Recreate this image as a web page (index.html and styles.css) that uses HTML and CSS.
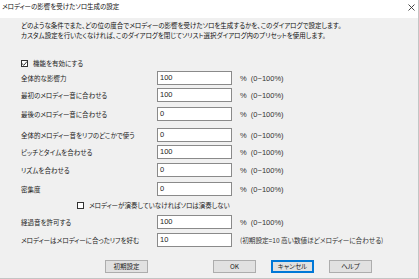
FILE: index.html
```html
<!DOCTYPE html>
<html lang="ja">
<head>
<meta charset="utf-8">
<link rel="stylesheet" href="styles.css">
</head>
<body>
<div class="dialog">
  <div class="titlebar">
    <span class="title">メロディーの影響を受けたソロ生成の設定</span>
    <svg class="close" width="7" height="7" viewBox="0 0 7 7"><path d="M0.5 0.5L6.5 6.5M6.5 0.5L0.5 6.5" stroke="#333" stroke-width="0.9"/></svg>
  </div>
  <div class="content">
    <p class="desc">どのような条件でまた、どの位の度合でメロディーの影響を受けたソロを生成するかを、このダイアログで設定します。<br>カスタム設定を行いたくなければ、このダイアログを閉じてソリスト選択ダイアログ内のプリセットを使用します。</p>
    <label class="check-row">
      <span class="box"><svg width="7" height="7" viewBox="0 0 7 7"><path d="M1 3.6L2.8 5.3L6 1.5" fill="none" stroke="#222" stroke-width="0.9"/></svg></span>
      <span>機能を有効にする</span>
    </label>
    <div class="row mt3"><span class="lbl">全体的な影響力</span><span class="input">100</span><span class="unit">%  (0~100%)</span></div>
    <div class="row mt3"><span class="lbl">最初のメロディー音に合わせる</span><span class="input">100</span><span class="unit">%  (0~100%)</span></div>
    <div class="row mt5"><span class="lbl">最後のメロディー音に合わせる</span><span class="input">0</span><span class="unit">%  (0~100%)</span></div>
    <div class="row mt7"><span class="lbl">全体的メロディー音をリフのどこかで使う</span><span class="input">0</span><span class="unit">%  (0~100%)</span></div>
    <div class="row mt3"><span class="lbl">ピッチとタイムを合わせる</span><span class="input">100</span><span class="unit">%  (0~100%)</span></div>
    <div class="row mt4"><span class="lbl">リズムを合わせる</span><span class="input">0</span><span class="unit">%  (0~100%)</span></div>
    <div class="row mt5"><span class="lbl">密集度</span><span class="input">0</span><span class="unit">%  (0~100%)</span></div>
    <label class="check-row sub">
      <span class="box"></span>
      <span>メロディーが演奏していなければソロは演奏しない</span>
    </label>
    <div class="row mt5"><span class="lbl">経過音を許可する</span><span class="input">100</span><span class="unit">%  (0~100%)</span></div>
    <div class="row mt4"><span class="lbl">メロディーはメロディーに合ったリフを好む</span><span class="input">10</span><span class="unit note">(初期設定=10 高い数値ほどメロディーに合わせる)</span></div>
  </div>
  <div class="footer">
    <button class="btn reset">初期設定</button>
    <button class="btn">OK</button>
    <button class="btn default">キャンセル</button>
    <button class="btn">ヘルプ</button>
  </div>
</div>
</body>
</html>
```
FILE: styles.css
```css
html, body {
  margin: 0;
  padding: 0;
  background: #f0f0f0;
}
body {
  font-family: "Noto Sans CJK JP", "Noto Sans", sans-serif;
  font-feature-settings: "palt";
  font-size: 6.5px;
  color: #222;
  white-space: nowrap;
}
.dialog {
  width: 418px;
  height: 278px;
  background: #f0f0f0;
  border-right: 1px solid #c4c4c4;
  border-bottom: 1px solid #c4c4c4;
  display: flex;
  flex-direction: column;
}
.titlebar {
  height: 18px;
  background: #fff;
  display: flex;
  justify-content: space-between;
  align-items: flex-start;
  padding: 1px 3px 0 2px;
  box-sizing: border-box;
  line-height: 11px;
  color: #111;
}
.close {
  margin-top: 3px;
}
.content {
  padding-left: 21px;
}
.desc {
  margin: 2px 0 0;
  line-height: 10px;
  color: #111;
}
.check-row {
  display: flex;
  align-items: center;
  height: 10px;
  margin-top: 18px;
  gap: 5px;
}
.check-row.sub {
  margin-top: 4px;
  margin-left: 56px;
}
.box {
  width: 7px;
  height: 7px;
  border: 1px solid #333;
  background: #fff;
  box-sizing: border-box;
  display: flex;
}
.box svg {
  margin: -1px;
}
.row {
  display: flex;
  align-items: center;
  height: 14px;
}
.mt3 { margin-top: 3px; }
.mt4 { margin-top: 4px; }
.mt5 { margin-top: 5px; }
.mt7 { margin-top: 7px; }
.lbl {
  width: 136px;
}
.input {
  width: 75px;
  height: 14px;
  box-sizing: border-box;
  background: #fff;
  border: 1px solid #8a8a8a;
  padding-left: 2px;
  line-height: 12px;
  font-family: "Liberation Sans", sans-serif;
  font-size: 7.5px;
  color: #222;
}
.unit {
  margin-left: 8px;
  color: #333;
  white-space: pre;
  font-family: "Liberation Sans", sans-serif;
  font-size: 7.5px;
}
.unit.note {
  font-family: "Noto Sans CJK JP", sans-serif;
  font-size: 6.6px;
}
.footer {
  display: flex;
  margin-top: 13px;
  padding-left: 105px;
  gap: 15px;
}
.btn {
  width: 43px;
  height: 13px;
  padding: 0;
  font: inherit;
  line-height: 11px;
  color: #222;
  background: #e1e1e1;
  border: 1px solid #adadad;
  box-sizing: border-box;
}
.btn.reset {
  margin-right: 50px;
}
.btn.default {
  border: 1px solid #0078d7;
  box-shadow: inset 0 0 0 1px #0078d7;
}
```
